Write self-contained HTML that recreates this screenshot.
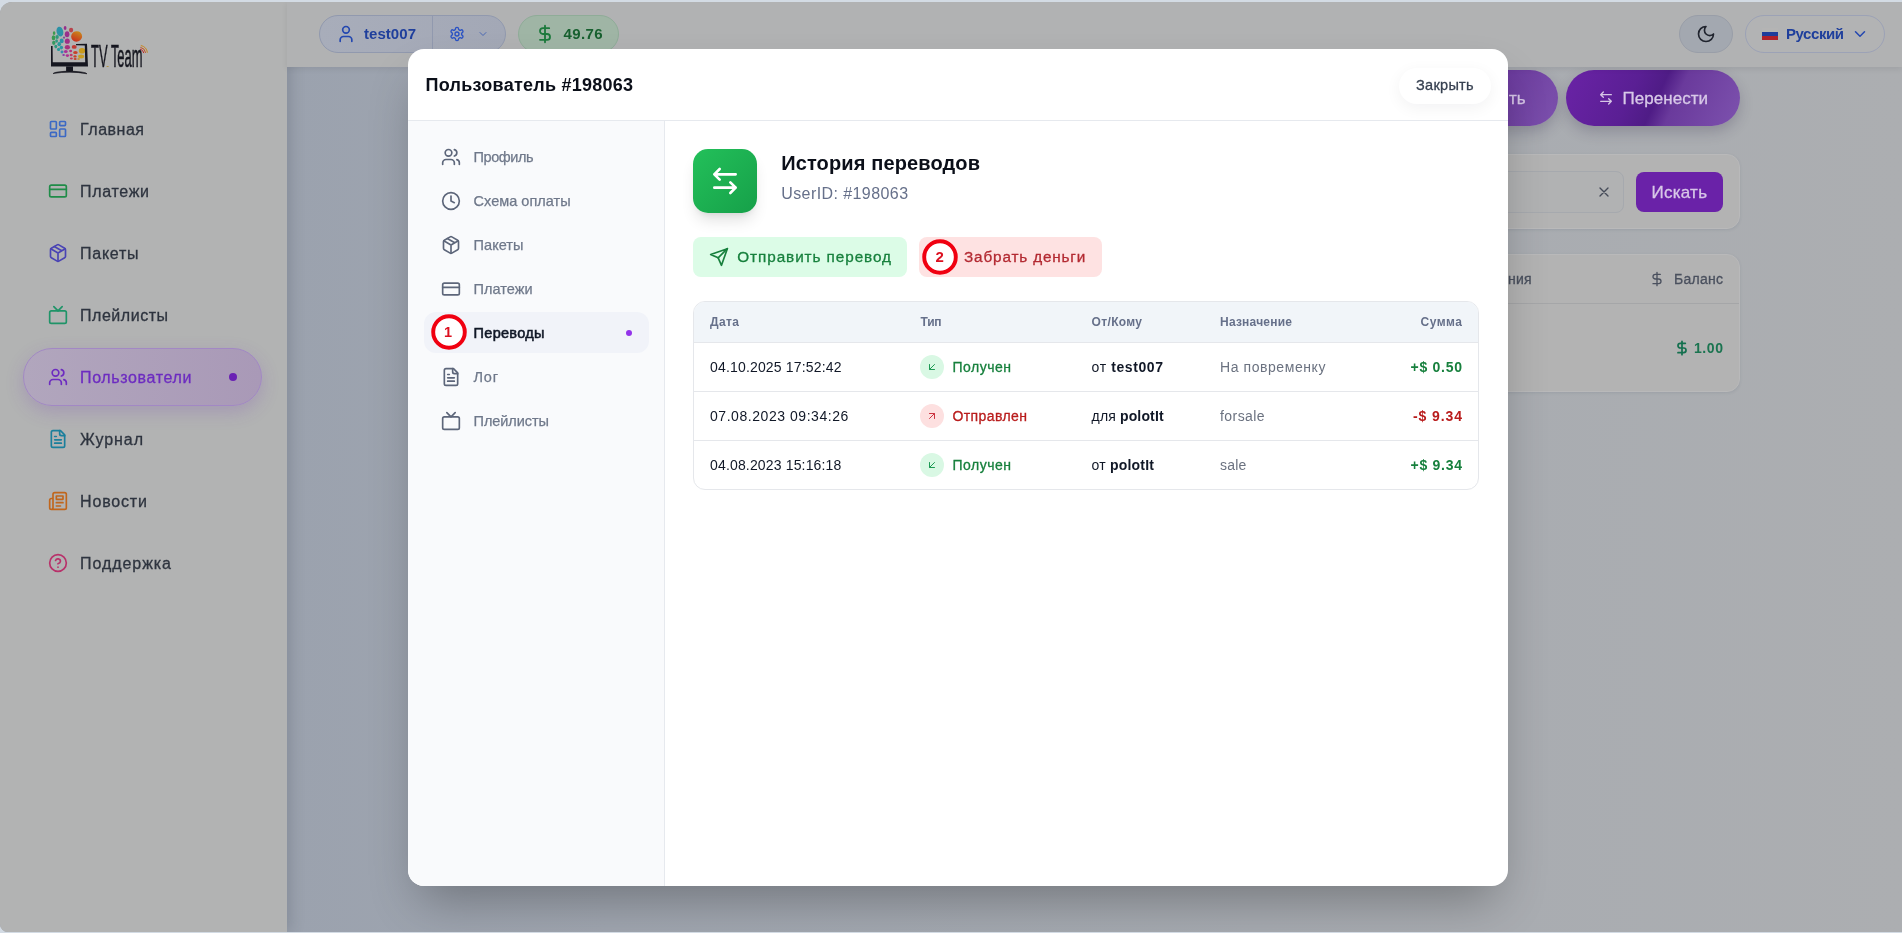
<!DOCTYPE html>
<html lang="ru">
<head>
<meta charset="utf-8">
<title>TV Team — Пользователь #198063</title>
<style>
*{box-sizing:border-box;margin:0;padding:0}
html,body{width:1902px;height:933px;overflow:hidden}
body{font-family:"Liberation Sans",sans-serif;background:#d3dbe4;position:relative;color:#111827}
.abs{position:absolute}
svg{display:block}
.ic{fill:none;stroke:currentColor;stroke-width:2;stroke-linecap:round;stroke-linejoin:round}
.t{position:absolute;white-space:nowrap;line-height:1;transform-origin:0 50%}

/* window frame */
#win{will-change:transform;position:absolute;left:0;top:2px;width:1902px;height:930px;border-radius:12px 0 0 8px;overflow:hidden;background:#a4a8af}

/* sidebar */
#side{position:absolute;left:0;top:0;width:287px;height:930px;background:#b2b3b3;box-shadow:3px 0 14px rgba(40,48,66,.2)}
.nav{position:absolute;left:49px;height:18px;width:220px;color:#2e343f}
.nav svg{position:absolute;left:-1.300px;top:-0.900px;width:20px;height:20px}
.nav span{-webkit-text-stroke:0.300px currentColor;position:absolute;left:31px;top:1px;font-size:16px;line-height:18px;white-space:nowrap}

#act{left:23px;top:346px;width:239px;height:58px;border-radius:29px;background:linear-gradient(90deg,#b1a6bd,#a999b7);border:1px solid #a288c4;box-shadow:0 6px 18px rgba(120,60,180,.22)}
/* main */
#main{position:absolute;left:287px;top:0;width:1615px;height:930px;background:linear-gradient(90deg,#9ba2ae 0%,#a0a6b0 20%,#a7abb1 60%,#acaeb1 100%)}
#top{position:absolute;left:287px;top:0;width:1615px;height:65px;background:#b1b2b3;box-shadow:0 2px 6px rgba(0,0,0,.08)}

.pill{position:absolute;border:1px solid;border-radius:19px}
.pbtn{position:absolute;border-radius:28px;background:linear-gradient(115deg,#6a23a6 0%,#5a1f94 38%,#4f1c86 52%,#6a3a9c 62%,#7d52ae 100%);box-shadow:0 6px 14px rgba(40,30,70,.22)}
.card{position:absolute;border-radius:13px;background:#b3b3b3;border:1px solid #b9b9ba;box-shadow:0 1px 3px rgba(60,70,90,.12)}
/* modal */
#modal{position:absolute;left:408px;top:47px;width:1100px;height:837px;background:#fff;border-radius:16px;box-shadow:0 25px 50px -12px rgba(0,0,0,.3);overflow:hidden}
.mnav{position:absolute;left:33px;height:18px;width:200px;color:#6f788a}
.mnav svg{position:absolute;left:0.100px;top:-0.800px;width:20px;height:20px;color:#5d667a}
.mnav span{-webkit-text-stroke:0.250px currentColor;position:absolute;left:32px;top:0;font-size:14.500px;line-height:18px;white-space:nowrap}
.th{font-size:12px;font-weight:700;color:#66708a}
.td{font-size:14px;color:#111827}
.t.r{transform-origin:100% 50%}
.dot{position:absolute;left:512px;width:24px;height:24px;border-radius:50%}
.dot svg{position:absolute;left:6px;top:6px;width:12px;height:12px}
.dot.g{background:#d9f8e4;color:#1d9a54}
.dot.rd{background:#fde0e0;color:#cc3340}
.md{-webkit-text-stroke:0.300px currentColor}
</style>
</head>
<body>
<div id="win">
  <div id="main">
    <!-- coordinates inside #main are page x-287, page y-2 -->
    <div class="pbtn" style="left:1100px;top:68px;width:171px;height:56px"></div>
    <span class="t md" id="t_tb" style="left:1222px;top:88px;font-size:17px;color:#d6c6e6">ть</span>
    <div class="pbtn" style="left:1279px;top:68px;width:174px;height:56px"></div>
    <svg class="abs ic" style="left:1311px;top:88px;color:#d6c6e6" width="16" height="16" viewBox="0 0 24 24"><path d="M8 3 4 7l4 4M4 7h16M16 21l4-4-4-4M20 17H4"/></svg>
    <span class="t md" id="t_move" style="left:1335.6px;top:88px;font-size:17px;color:#d8c9e8;letter-spacing:0.02px">Перенести</span>

    <div class="card" style="left:900px;top:152px;width:553px;height:75px"></div>
    <div class="abs" style="left:900px;top:169px;width:437px;height:42px;border:1px solid #a6a9ae;border-radius:8px;background:#b1b2b3"></div>
    <svg class="abs ic" style="left:1309px;top:182px;color:#454b58" width="16" height="16" viewBox="0 0 24 24"><path d="M18 6 6 18M6 6l12 12"/></svg>
    <div class="abs" style="left:1349px;top:170px;width:87px;height:40px;border-radius:8px;background:#6a22a8"></div>
    <span class="t md" id="t_find" style="left:1364.6px;top:182px;font-size:17px;color:#d8c8e8;letter-spacing:0.23px">Искать</span>

    <div class="card" style="left:900px;top:252px;width:553px;height:138px"></div>
    <div class="abs" style="left:900px;top:301px;width:552px;height:1px;background:#a5a6a8"></div>
    <span class="t md" id="t_niya" style="left:1221.0px;top:269.600px;font-size:14px;color:#4a505e;letter-spacing:0.23px">ния</span>
    <svg class="abs ic" style="left:1361.700px;top:268.600px;color:#4a505e" width="16" height="16" viewBox="0 0 24 24"><path d="M12 2v20M17 5H9.500a3.500 3.500 0 0 0 0 7h5a3.500 3.500 0 0 1 0 7H6"/></svg>
    <span class="t md" id="t_balh" style="left:1387.0px;top:269.600px;font-size:14px;color:#4a505e;letter-spacing:0.27px">Баланс</span>
    <svg class="abs ic" style="left:1386.900px;top:337.500px;color:#14704f;stroke-width:2.600" width="16" height="16" viewBox="0 0 24 24"><path d="M12 2v20M17 5H9.500a3.500 3.500 0 0 0 0 7h5a3.500 3.500 0 0 1 0 7H6"/></svg>
    <span class="t" id="t_one" style="left:1407.0px;top:339px;font-size:14px;font-weight:700;color:#1b7450;letter-spacing:0.58px">1.00</span>
  </div>
  <div id="side">
    <svg class="abs" style="left:40px;top:18px" width="120" height="60" viewBox="40 20 120 60">
      <defs>
        <linearGradient id="og" x1="0" y1="1" x2="1" y2="0"><stop offset="0.15" stop-color="#c9301f"/><stop offset="1" stop-color="#c99a1c"/></linearGradient>
      </defs>
      <path d="M52.4 47 L52.4 62.4 L85.4 62.4 L85 46 L76 45.4 L76 44 L87 43.8 L88 66.4 L51 66.4 L51 47Z" fill="#b9b9b9"/>
      <g>
        <ellipse cx="59.9" cy="31.6" rx="3.3" ry="5" fill="#2b92a6" transform="rotate(-14 59.9 31.6)"/>
        <ellipse cx="65.1" cy="28" rx="1.4" ry="2.1" fill="#96308c"/>
        <ellipse cx="71.1" cy="30.1" rx="2.1" ry="2.3" fill="#b8434c"/>
        <ellipse cx="76.6" cy="36.4" rx="5.5" ry="5.2" fill="url(#og)" transform="rotate(-20 76.6 36.4)"/>
        <ellipse cx="67.1" cy="34.3" rx="2.3" ry="3" fill="#992f8c"/>
        <ellipse cx="67.3" cy="41.2" rx="2.5" ry="2.6" fill="#a02f86"/>
        <ellipse cx="67.4" cy="47.3" rx="2.6" ry="2.2" fill="#a8307e"/>
        <ellipse cx="74.2" cy="46.9" rx="2.5" ry="1.9" fill="#c23a34"/>
        <ellipse cx="75.4" cy="52.4" rx="2.3" ry="1.5" fill="#c8402a"/>
        <ellipse cx="82" cy="50.8" rx="3.2" ry="2.8" fill="#c99a1c"/>
        <ellipse cx="81.1" cy="56.5" rx="3" ry="1.9" fill="#c99c1e"/>
        <ellipse cx="61.7" cy="40.9" rx="2" ry="2.4" fill="#2b92a6"/>
        <ellipse cx="59.2" cy="44.2" rx="1.8" ry="2.1" fill="#2a9a9c"/>
        <ellipse cx="61.4" cy="47.6" rx="1.7" ry="1.8" fill="#2b96a2"/>
        <ellipse cx="58.6" cy="49.4" rx="1.6" ry="1.7" fill="#2a9a9c"/>
        <ellipse cx="62" cy="52" rx="1.5" ry="1.4" fill="#3a8ab0"/>
        <ellipse cx="57.1" cy="37" rx="1.7" ry="2.1" fill="#2f9a78"/>
        <ellipse cx="54.1" cy="33.1" rx="1.3" ry="1.9" fill="#3f9a4e"/>
        <ellipse cx="53.5" cy="37.7" rx="1.8" ry="2.5" fill="#3a9a52"/>
        <ellipse cx="53.8" cy="42.8" rx="1.7" ry="2.1" fill="#369a60"/>
        <ellipse cx="55.8" cy="46.6" rx="1.5" ry="1.8" fill="#2f9a80"/>
        <ellipse cx="56.6" cy="41" rx="1.4" ry="1.7" fill="#2f9a80"/>
        <ellipse cx="64" cy="37.6" rx="1" ry="1.2" fill="#7a4a9a"/>
        <ellipse cx="65.8" cy="51.6" rx="1.9" ry="1.5" fill="#a8309a"/>
        <ellipse cx="63.6" cy="55" rx="1.3" ry="1.1" fill="#8a3aa6"/>
        <ellipse cx="67.4" cy="55.6" rx="1.7" ry="1.3" fill="#b03090"/>
        <ellipse cx="70.6" cy="51" rx="1.5" ry="1.3" fill="#b8307a"/>
        <ellipse cx="71.2" cy="55" rx="1.5" ry="1.2" fill="#c03a6a"/>
        <ellipse cx="71.4" cy="58.4" rx="1.5" ry="1" fill="#c03a5a"/>
        <ellipse cx="75" cy="56.4" rx="1.6" ry="1.2" fill="#c8402a"/>
        <ellipse cx="75.2" cy="59" rx="1.5" ry="0.9" fill="#c8402a"/>
        <ellipse cx="78.6" cy="59" rx="1.4" ry="0.8" fill="#c9821c"/>
      </g>
      <path d="M51 46 L52.6 46 L52.8 62.2 L85.2 62.2 L84.8 45.6 L76 45.3 L76 43.9 L87 43.7 L88 66.5 L51 66.5Z" fill="#15161f"/>
      <rect x="66.1" y="66.4" width="6.9" height="4.6" fill="#15161f"/>
      <path d="M53 73.6 Q53.4 72.6 58 71.9 Q69.6 70 81 71.9 Q86.6 72.6 87 73.8 Q70 70.6 53 73.6Z" fill="#15161f" stroke="#15161f" stroke-width="0.6"/>
      <text x="91" y="66.8" font-family="'Liberation Sans',sans-serif" font-size="31" fill="#15161f" stroke="#15161f" stroke-width="0.5" textLength="51.5" lengthAdjust="spacingAndGlyphs">TV Team</text>
      <rect x="106.6" y="66.2" width="2" height="0.8" fill="#b08a2a"/>
      <path transform="translate(-0.4 1.500)" d="M140.4 47.6 Q143.6 48.4 144.2 51.6" fill="none" stroke="#b8282a" stroke-width="1"/>
      <path transform="translate(-0.4 1.500)" d="M140.8 45.8 Q145.4 46.8 146 51.4" fill="none" stroke="#c8501c" stroke-width="1"/>
      <path transform="translate(-0.4 1.500)" d="M141.2 44 Q147 45.2 147.8 51.2" fill="none" stroke="#c9861c" stroke-width="1"/>
    </svg>

    <div class="nav" style="top:118px"><svg viewBox="0 0 24 24" class="ic" style="color:#3c69c4"><rect x="3" y="3" width="7" height="9" rx="1"/><rect x="14" y="3" width="7" height="5" rx="1"/><rect x="14" y="12" width="7" height="9" rx="1"/><rect x="3" y="16" width="7" height="5" rx="1"/></svg><span id="n1" style="letter-spacing:0.52px">Главная</span></div>
    <div class="nav" style="top:180px"><svg viewBox="0 0 24 24" class="ic" style="color:#1f8c48"><rect x="2" y="5" width="20" height="14" rx="2"/><path d="M2 10h20"/></svg><span id="n2" style="letter-spacing:0.68px">Платежи</span></div>
    <div class="nav" style="top:242px"><svg viewBox="0 0 24 24" class="ic" style="color:#4a44b4"><path d="M21 16V8a2 2 0 0 0-1-1.73l-7-4a2 2 0 0 0-2 0l-7 4A2 2 0 0 0 3 8v8a2 2 0 0 0 1 1.73l7 4a2 2 0 0 0 2 0l7-4A2 2 0 0 0 21 16z"/><path d="M3.3 7 12 12l8.7-5M12 22V12M7.5 4.2l9 5.2"/></svg><span id="n3" style="letter-spacing:0.76px">Пакеты</span></div>
    <div class="nav" style="top:304px"><svg viewBox="0 0 24 24" class="ic" style="color:#1f9468"><rect x="2" y="7" width="20" height="15" rx="2"/><path d="m17 2-5 5-5-5"/></svg><span id="n4" style="letter-spacing:0.53px">Плейлисты</span></div>
    <div class="abs" id="act"></div>
    <div class="nav" style="top:366px;color:#6d2cc0"><svg viewBox="0 0 24 24" class="ic"><path d="M16 21v-2a4 4 0 0 0-4-4H6a4 4 0 0 0-4 4v2"/><circle cx="9" cy="7" r="4"/><path d="M22 21v-2a4 4 0 0 0-3-3.87M16 3.13a4 4 0 0 1 0 7.75"/></svg><span id="n5" style="letter-spacing:0.63px">Пользователи</span></div>
    <div class="abs" style="left:229px;top:371px;width:8px;height:8px;border-radius:50%;background:#6a21b4"></div>
    <div class="nav" style="top:428px"><svg viewBox="0 0 24 24" class="ic" style="color:#1a7f9c"><path d="M15 2H6a2 2 0 0 0-2 2v16a2 2 0 0 0 2 2h12a2 2 0 0 0 2-2V7Z"/><path d="M14 2v4a2 2 0 0 0 2 2h4M10 9H8M16 13H8M16 17H8"/></svg><span id="n6" style="letter-spacing:0.92px">Журнал</span></div>
    <div class="nav" style="top:490px"><svg viewBox="0 0 24 24" class="ic" style="color:#c0661c"><path d="M4 22h16a2 2 0 0 0 2-2V4a2 2 0 0 0-2-2H8a2 2 0 0 0-2 2v16a2 2 0 0 1-2 2Zm0 0a2 2 0 0 1-2-2v-9c0-1.1.9-2 2-2h2"/><path d="M18 14h-8M15 18h-5M10 6h8v4h-8V6Z"/></svg><span id="n7" style="letter-spacing:0.84px">Новости</span></div>
    <div class="nav" style="top:552px"><svg viewBox="0 0 24 24" class="ic" style="color:#b8316a"><circle cx="12" cy="12" r="10"/><path d="M9.09 9a3 3 0 0 1 5.83 1c0 2-3 3-3 3M12 17h.01"/></svg><span id="n8" style="letter-spacing:0.94px">Поддержка</span></div>
  </div>
  <div id="top">
    <!-- coordinates inside #top are page x-287, page y-2 -->
    <div class="pill" style="left:32px;top:13px;width:187px;height:38px;background:linear-gradient(90deg,#a8adba,#a3a8b6);border-color:#9199ae"></div>
    <div class="abs" style="left:145px;top:14px;width:1px;height:36px;background:#9199ae"></div>
    <svg class="abs ic" style="left:49px;top:22px;color:#2347b0" width="20" height="20" viewBox="0 0 24 24"><path d="M19 21v-2a4 4 0 0 0-4-4H9a4 4 0 0 0-4 4v2"/><circle cx="12" cy="7" r="4"/></svg>
    <span class="t" id="t_user" style="left:77.0px;top:24px;font-size:15px;font-weight:700;color:#1f3f9c;letter-spacing:0.05px">test007</span>
    <svg class="abs ic" style="left:162px;top:24px;color:#2a52c4" width="16" height="16" viewBox="0 0 24 24"><path d="M12.22 2h-.44a2 2 0 0 0-2 2v.18a2 2 0 0 1-1 1.73l-.43.25a2 2 0 0 1-2 0l-.15-.08a2 2 0 0 0-2.73.73l-.22.38a2 2 0 0 0 .73 2.73l.15.1a2 2 0 0 1 1 1.72v.51a2 2 0 0 1-1 1.74l-.15.09a2 2 0 0 0-.73 2.73l.22.38a2 2 0 0 0 2.73.73l.15-.08a2 2 0 0 1 2 0l.43.25a2 2 0 0 1 1 1.73V20a2 2 0 0 0 2 2h.44a2 2 0 0 0 2-2v-.18a2 2 0 0 1 1-1.73l.43-.25a2 2 0 0 1 2 0l.15.08a2 2 0 0 0 2.73-.73l.22-.39a2 2 0 0 0-.73-2.73l-.15-.08a2 2 0 0 1-1-1.74v-.5a2 2 0 0 1 1-1.74l.15-.09a2 2 0 0 0 .73-2.73l-.22-.38a2 2 0 0 0-2.73-.73l-.15.08a2 2 0 0 1-2 0l-.43-.25a2 2 0 0 1-1-1.73V4a2 2 0 0 0-2-2z"/><circle cx="12" cy="12" r="3"/></svg>
    <svg class="abs ic" style="left:190px;top:26px;color:#4a68b4" width="12" height="12" viewBox="0 0 24 24"><path d="m6 9 6 6 6-6"/></svg>

    <div class="pill" style="left:231px;top:13px;width:101px;height:38px;background:#9fb5a5;border-color:#8fac98"></div>
    <svg class="abs ic" style="left:248px;top:22px;color:#1c7a3c;stroke-width:2.2" width="20" height="20" viewBox="0 0 24 24"><path d="M12 2v20M17 5H9.500a3.500 3.500 0 0 0 0 7h5a3.500 3.500 0 0 1 0 7H6"/></svg>
    <span class="t" id="t_bal" style="left:276.6px;top:24px;font-size:15px;font-weight:700;color:#17602f;letter-spacing:0.36px">49.76</span>

    <div class="pill" style="left:1392px;top:13px;width:54px;height:38px;background:#a3a8b0;border-color:#999ea8"></div>
    <svg class="abs ic" style="left:1409.200px;top:22.200px;color:#20242e" width="20" height="20" viewBox="0 0 24 24"><path d="M12 3a6 6 0 0 0 9 9 9 9 0 1 1-9-9Z"/></svg>

    <div class="pill" style="left:1458px;top:13px;width:140px;height:38px;background:#b2b3b4;border-color:#9ca2b6"></div>
    <div class="abs" style="left:1475px;top:25.500px;width:16px;height:4px;background:#b4b4b4"></div>
    <div class="abs" style="left:1475px;top:29.500px;width:16px;height:4px;background:#1f3c9c"></div>
    <div class="abs" style="left:1475px;top:33.500px;width:16px;height:4px;background:#b0202a"></div>
    <span class="t" id="t_lang" style="left:1499.0px;top:24px;font-size:15px;font-weight:700;color:#1f3f9c;letter-spacing:-0.44px">Русский</span>
    <svg class="abs ic" style="left:1564.200px;top:22.900px;color:#2347b0" width="18" height="18" viewBox="0 0 24 24"><path d="m6 9 6 6 6-6"/></svg>
  </div>
  <div id="modal">
    <!-- coordinates inside #modal are page x-408, page y-49 -->
    <span class="t" id="t_title" style="left:17.6px;top:27px;font-size:18px;font-weight:700;color:#0b0f19;letter-spacing:0.25px">Пользователь #198063</span>
    <div class="abs" style="left:991px;top:19px;width:92px;height:36px;border-radius:18px;background:#fff;box-shadow:0 4px 16px rgba(15,23,42,.055)"></div>
    <span class="t md" id="t_close" style="left:1008.0px;top:29px;font-size:14.500px;color:#374151;letter-spacing:0.29px">Закрыть</span>
    <div class="abs" style="left:0;top:71px;width:1100px;height:1px;background:#e6e9ee"></div>

    <div class="abs" style="left:0;top:72px;width:257px;height:765px;background:#f9fafc;border-right:1px solid #e6e9ee"></div>

    <div class="mnav" style="top:99px"><svg viewBox="0 0 24 24" class="ic"><path d="M16 21v-2a4 4 0 0 0-4-4H6a4 4 0 0 0-4 4v2"/><circle cx="9" cy="7" r="4"/><path d="M22 21v-2a4 4 0 0 0-3-3.870M16 3.130a4 4 0 0 1 0 7.750"/></svg><span id="m1" style="margin-left:0.6px;letter-spacing:-0.43px">Профиль</span></div>
    <div class="mnav" style="top:143px"><svg viewBox="0 0 24 24" class="ic"><circle cx="12" cy="12" r="10"/><path d="M12 6v6l4 2"/></svg><span id="m2" style="margin-left:0.6px;letter-spacing:0.01px">Схема оплаты</span></div>
    <div class="mnav" style="top:187px"><svg viewBox="0 0 24 24" class="ic"><path d="M21 16V8a2 2 0 0 0-1-1.730l-7-4a2 2 0 0 0-2 0l-7 4A2 2 0 0 0 3 8v8a2 2 0 0 0 1 1.730l7 4a2 2 0 0 0 2 0l7-4A2 2 0 0 0 21 16z"/><path d="M3.300 7 12 12l8.700-5M12 22V12M7.500 4.200l9 5.200"/></svg><span id="m3" style="margin-left:0.6px;letter-spacing:0.03px">Пакеты</span></div>
    <div class="mnav" style="top:231px"><svg viewBox="0 0 24 24" class="ic"><rect x="2" y="5" width="20" height="14" rx="2"/><path d="M2 10h20"/></svg><span id="m4" style="margin-left:0.6px;letter-spacing:0.03px">Платежи</span></div>
    <div class="abs" style="left:16px;top:263px;width:225px;height:41px;border-radius:12px;background:#f1f3f9"></div>
    <div class="mnav" style="top:275px;color:#111827"><span id="m5" style="-webkit-text-stroke:0.550px currentColor;font-weight:400;margin-left:0.6px;letter-spacing:0.29px">Переводы</span></div>
    <div class="abs" style="left:218px;top:281px;width:6px;height:6px;border-radius:50%;background:#9333ea"></div>
    <svg class="abs" style="left:21.100px;top:262.900px" width="40" height="40" viewBox="0 0 40 40"><circle cx="20" cy="20" r="15.800" fill="#fff" stroke="#f00010" stroke-width="3.900"/></svg>
    <span class="t" id="t_n1" style="left:36px;top:276px;font-size:14.500px;font-weight:700;color:#dc1020">1</span>
    <div class="mnav" style="top:319px"><svg viewBox="0 0 24 24" class="ic"><path d="M15 2H6a2 2 0 0 0-2 2v16a2 2 0 0 0 2 2h12a2 2 0 0 0 2-2V7Z"/><path d="M14 2v4a2 2 0 0 0 2 2h4M10 9H8M16 13H8M16 17H8"/></svg><span id="m6" style="margin-left:0.6px;letter-spacing:0.76px">Лог</span></div>
    <div class="mnav" style="top:363px"><svg viewBox="0 0 24 24" class="ic"><rect x="2" y="7" width="20" height="15" rx="2"/><path d="m17 2-5 5-5-5"/></svg><span id="m7" style="margin-left:0.6px;letter-spacing:-0.07px">Плейлисты</span></div>

    <div class="abs" style="left:285px;top:100px;width:64px;height:64px;border-radius:15px;background:linear-gradient(135deg,#23c05a,#16a049);box-shadow:0 10px 15px -3px rgba(0,0,0,.12),0 4px 6px -4px rgba(0,0,0,.1)"></div>
    <svg class="abs ic" style="left:301px;top:116px;color:#fff" width="32" height="32" viewBox="0 0 24 24"><path d="M8 3 4 7l4 4M4 7h16M16 21l4-4-4-4M20 17H4"/></svg>
    <span class="t" id="t_hist" style="left:373.2px;top:104px;font-size:20px;font-weight:700;color:#0b0f19;letter-spacing:0.13px">История переводов</span>
    <span class="t" id="t_uid" style="left:373.2px;top:137px;font-size:16px;color:#66708a;letter-spacing:0.42px">UserID: #198063</span>

    <div class="abs" style="left:285px;top:188px;width:214px;height:40px;border-radius:8px;background:#dcfce7"></div>
    <svg class="abs ic" style="left:301px;top:197.800px;color:#17803d" width="20" height="20" viewBox="0 0 24 24"><path d="m22 2-7 20-4-9-9-4Z"/><path d="M22 2 11 13"/></svg>
    <span class="t md" id="t_send" style="left:329.3px;top:200.200px;font-size:15.300px;color:#17803d;letter-spacing:0.92px">Отправить перевод</span>
    <div class="abs" style="left:511px;top:188px;width:183px;height:40px;border-radius:8px;background:#fee2e2"></div>
    <span class="t md" id="t_take" style="left:556.0px;top:200.200px;font-size:15.300px;color:#b32a32;letter-spacing:0.84px">Забрать деньги</span>
    <svg class="abs" style="left:511.900px;top:187.900px" width="40" height="40" viewBox="0 0 40 40"><circle cx="20" cy="20" r="15.800" fill="#fff" stroke="#f00010" stroke-width="3.900"/></svg>
    <span class="t" id="t_n2" style="left:527.500px;top:199.500px;font-size:15px;font-weight:700;color:#dc1020">2</span>

    <div class="abs" id="tbl" style="left:285px;top:252px;width:786px;height:189px;border:1px solid #e5e7eb;border-radius:12px;overflow:hidden;background:#fff">
      <div class="abs" style="left:0;top:0;width:786px;height:41px;background:#f1f5f9;border-bottom:1px solid #e5e7eb"></div>
      <div class="abs" style="left:0;top:89px;width:786px;height:1px;background:#e5e7eb"></div>
      <div class="abs" style="left:0;top:138px;width:786px;height:1px;background:#e5e7eb"></div>
    </div>
    <span class="t th" id="t_h1" style="left:302.0px;top:267px;letter-spacing:0.41px">Дата</span>
    <span class="t th" id="t_h2" style="left:512.6px;top:267px;letter-spacing:-0.25px">Тип</span>
    <span class="t th" id="t_h3" style="left:683.6px;top:267px;letter-spacing:0.33px">От/Кому</span>
    <span class="t th" id="t_h4" style="left:812.0px;top:267px;letter-spacing:0.22px">Назначение</span>
    <span class="t th r" id="t_h5" style="left:1012.6px;top:267px;letter-spacing:0.49px">Сумма</span>

    <span class="t td" id="t_d1" style="left:302.0px;top:311px;letter-spacing:0.17px">04.10.2025 17:52:42</span>
    <span class="t td" id="t_d2" style="left:302.0px;top:360px;letter-spacing:0.55px">07.08.2023 09:34:26</span>
    <span class="t td" id="t_d3" style="left:302.0px;top:409px;letter-spacing:0.16px">04.08.2023 15:16:18</span>

    <div class="dot g" style="top:306px"><svg viewBox="0 0 24 24" class="ic"><path d="M17 7 7 17M17 17H7V7"/></svg></div>
    <div class="dot rd" style="top:355px"><svg viewBox="0 0 24 24" class="ic"><path d="M7 7h10v10M7 17 17 7"/></svg></div>
    <div class="dot g" style="top:404px"><svg viewBox="0 0 24 24" class="ic"><path d="M17 7 7 17M17 17H7V7"/></svg></div>
    <span class="t td md" id="t_t1" style="left:544.4px;top:311px;color:#17803d;letter-spacing:0.51px">Получен</span>
    <span class="t td md" id="t_t2" style="left:544.4px;top:360px;color:#b91c1c;letter-spacing:0.42px">Отправлен</span>
    <span class="t td md" id="t_t3" style="left:544.4px;top:409px;color:#17803d;letter-spacing:0.51px">Получен</span>

    <span class="t td" id="t_f1" style="left:683.6px;top:311px;letter-spacing:0.59px">от <b>test007</b></span>
    <span class="t td" id="t_f2" style="left:683.6px;top:360px;letter-spacing:0.14px">для <b>polotIt</b></span>
    <span class="t td" id="t_f3" style="left:683.6px;top:409px;letter-spacing:0.20px">от <b>polotIt</b></span>

    <span class="t td" id="t_p1" style="left:812.0px;top:311px;color:#6b7280;letter-spacing:0.57px">На повременку</span>
    <span class="t td" id="t_p2" style="left:812.0px;top:360px;color:#6b7280;letter-spacing:0.43px">forsale</span>
    <span class="t td" id="t_p3" style="left:812.0px;top:409px;color:#6b7280;letter-spacing:0.23px">sale</span>

    <span class="t td r" id="t_s1" style="left:1002.6px;top:311px;color:#17803d;font-weight:700;letter-spacing:0.72px">+$ 0.50</span>
    <span class="t td r" id="t_s2" style="left:1005.0px;top:360px;color:#b91c1c;font-weight:700;letter-spacing:0.90px">-$ 9.34</span>
    <span class="t td r" id="t_s3" style="left:1002.6px;top:409px;color:#17803d;font-weight:700;letter-spacing:0.72px">+$ 9.34</span>
  </div>
</div>
</body>
</html>
